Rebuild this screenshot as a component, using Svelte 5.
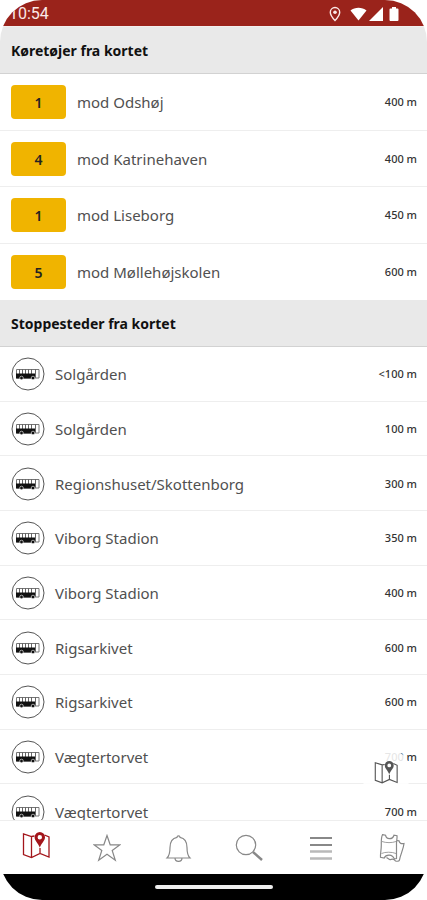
<script>
  const vehicles = [
    { line: '1', to: 'mod Odshøj', distance: '400 m' },
    { line: '4', to: 'mod Katrinehaven', distance: '400 m' },
    { line: '1', to: 'mod Liseborg', distance: '450 m' },
    { line: '5', to: 'mod Møllehøjskolen', distance: '600 m' }
  ];
  const stops = [
    { name: 'Solgården', distance: '<100 m' },
    { name: 'Solgården', distance: '100 m' },
    { name: 'Regionshuset/Skottenborg', distance: '300 m' },
    { name: 'Viborg Stadion', distance: '350 m' },
    { name: 'Viborg Stadion', distance: '400 m' },
    { name: 'Rigsarkivet', distance: '600 m' },
    { name: 'Rigsarkivet', distance: '600 m' },
    { name: 'Vægtertorvet', distance: '700 m' },
    { name: 'Vægtertorvet', distance: '700 m' }
  ];
</script>

{#snippet mapIcon()}
  <svg class="map" viewBox="0 0 28 28" aria-hidden="true">
    <path d="M12.500 4L9.500 4.500L1.500 2V22.500L9.500 25.500L18 21.500L27 25V5L22.500 3M9.500 4.500V25.500M18 16V21.500" fill="none" stroke="currentColor" stroke-width="1.300" />
    <path fill="currentColor" fill-rule="evenodd" d="M17.800 0a5.200 5.200 0 0 0-5.200 5.200c0 3.700 3.500 5.500 5.200 10.300c1.700-4.800 5.200-6.600 5.200-10.300a5.200 5.200 0 0 0-5.200-5.200zm0 3a2.200 2.200 0 1 1 0 4.400a2.200 2.200 0 0 1 0-4.400z" />
  </svg>
{/snippet}

<div class="phone">
  <div class="status">
    <span>10:54</span>
    <div class="signals">
      <svg width="12" height="16" viewBox="0 0 12 16" aria-hidden="true">
        <path d="M6 1.500a4.700 4.700 0 0 0-4.700 4.700C1.300 9.500 6 14.500 6 14.500s4.700-5 4.700-8.300A4.700 4.700 0 0 0 6 1.500z" fill="none" stroke="#fbe9e7" stroke-width="1.400" />
        <circle cx="6" cy="6.200" r="1.800" fill="#fbe9e7" />
      </svg>
      <svg class="wifi" width="17" height="16" viewBox="0 0 17 16" aria-hidden="true">
        <path d="M0.500 4.500C5 0.700 12 0.700 16.500 4.500L8.500 14.500z" fill="#fff" />
      </svg>
      <svg width="14" height="16" viewBox="0 0 14 16" aria-hidden="true"><path d="M14 1V15H0z" fill="#fff" /></svg>
      <svg class="battery" width="10" height="16" viewBox="0 0 10 16" aria-hidden="true">
        <path d="M3 1h4v1.500h1.500a1 1 0 0 1 1 1v10.500a1 1 0 0 1-1 1h-7a1 1 0 0 1-1-1V3.500a1 1 0 0 1 1-1H3z" fill="#fff" />
      </svg>
    </div>
  </div>

  <main>
    <h2>Køretøjer fra kortet</h2>
    <ul class="vehicles">
      {#each vehicles as v}
        <li><span class="line">{v.line}</span><span class="name">{v.to}</span><span class="distance">{v.distance}</span></li>
      {/each}
    </ul>
    <h2>Stoppesteder fra kortet</h2>
    <ul class="stops">
      {#each stops as s}
        <li>
          <svg class="bus" viewBox="0 0 34 34" aria-hidden="true">
            <circle cx="17" cy="17" r="16" fill="#fff" stroke="#555" stroke-width="1" />
            <path d="M5.500 12.500H28V21H5.500z" fill="#fff" stroke="#777" stroke-width="1" />
            <path d="M8.500 12v5M11.500 12v5M14.500 12v5M17.500 12v5M20.500 12v5M24.500 12v9" stroke="#666" stroke-width="1" />
            <path d="M5 16.500H24V21.500H5z" fill="#111" />
            <circle cx="10.500" cy="21" r="1.800" fill="#111" stroke="#fff" stroke-width=".6" />
            <circle cx="22" cy="21" r="1.800" fill="#111" stroke="#fff" stroke-width=".6" />
          </svg>
          <span class="name">{s.name}</span><span class="distance">{s.distance}</span>
        </li>
      {/each}
    </ul>
    <button class="show-map" aria-label="Vis kort">{@render mapIcon()}</button>
  </main>

  <nav>
    <button class="active" aria-label="Kort">{@render mapIcon()}</button>
    <button aria-label="Favoritter">
      <svg viewBox="0 0 28 28" aria-hidden="true"><path d="M14 1.500L17.200 10.800H27L19.200 16.500L22.300 26.200L14 20.300L5.700 26.200L8.800 16.500L1 10.800H10.800z" /></svg>
    </button>
    <button aria-label="Beskeder">
      <svg viewBox="0 0 28 28" aria-hidden="true"><path d="M3 24C5.500 21.500 6 19.500 6 13.500C6 7.500 9 4 13 3.300C13 1.500 16 1.500 16 3.300C20 4 23 7.500 23 13.500C23 19.500 23.500 21.500 26 24zM11 24C11 28.500 18 28.500 18 24" /></svg>
    </button>
    <button aria-label="Søg">
      <svg viewBox="0 0 28 28" aria-hidden="true"><circle cx="11" cy="11" r="9.700" /><path d="M18 18L27 26" stroke-width="2.400" /></svg>
    </button>
    <button aria-label="Menu">
      <svg viewBox="0 0 28 28" aria-hidden="true"><path d="M4 4H26M4 11H26" stroke-width="1.800" /><path d="M4 17.500H26M4 24.500H26" stroke="#b9b9b9" stroke-width="2.600" /></svg>
    </button>
    <button aria-label="Billetter">
      <svg viewBox="0 0 28 28" aria-hidden="true">
        <path d="M5.500 .7L8.500 1.200C9.300 5.800 15.500 5.800 17 1.200L20 1.700C20.400 4.500 19.300 7 19.500 11V24.500L17.300 24.900C15.500 20 9 20 7.200 24L3.500 23.300C3.200 20 4.300 16 4.300 11C4.300 7 4 3.500 5.500 .7z" />
        <path d="M5 7.500C9 9 15 9 19 7.500M4.500 19.500C8 17.800 15 17.800 19 19.500" stroke-width=".8" />
        <path d="M20 6.500L22 6.800C22.500 9.500 24.500 10 27 9.500C26.500 15 23.500 20 22.500 26C22 27.500 20.500 27.500 18.500 27C16.500 23.500 14 26 12.500 25.500L9.500 23.500" />
      </svg>
    </button>
  </nav>
  <div class="gesture"><span></span></div>
</div>

<style>
  :global(body) { margin: 0; background: #fff; }
  .phone {
    display: flex;
    flex-direction: column;
    height: 100vh;
    overflow: hidden;
    border-radius: 42px;
    background: #fff;
    color: #505050;
    font-family: "Noto Sans", "Open Sans", sans-serif;
  }
  .status {
    display: flex;
    align-items: center;
    justify-content: space-between;
    flex: none;
    box-sizing: border-box;
    height: 26px;
    padding: 2px 28px 0 9px;
    background: #9a231b;
    color: #fbe9e7;
    font: 16px/24px Roboto, sans-serif;
  }
  .signals { display: flex; align-items: center; }
  .wifi { margin-left: 9px; margin-right: 2px; }
  .battery { margin-left: 6px; }
  main {
    position: relative;
    flex: 1 1 0;
    min-height: 0;
    overflow: hidden;
  }
  h2 {
    box-sizing: border-box;
    height: 47px;
    margin: 0;
    padding: 0 11px;
    border-bottom: 1px solid #d2d2d2;
    background: #e9e9e9;
    color: #111;
    font-size: 14px;
    font-weight: 700;
    line-height: 47px;
  }
  h2:first-child { border-top: 1px solid #f3eeee; height: 48px; }
  ul {
    display: grid;
    grid-auto-rows: 1fr;
    margin: 0;
    padding: 0;
    list-style: none;
  }
  .vehicles { min-height: 226px; }
  .stops { min-height: 492px; }
  li {
    display: flex;
    align-items: center;
    padding: 1px 10px 0 11px;
    border-bottom: 1px solid #eee;
  }
  .vehicles li:last-child { border-bottom-color: #fff; }
  .line {
    width: 55px;
    height: 34px;
    margin-right: 11px;
    border-radius: 4px;
    background: #f0b400;
    color: #222;
    font-size: 14px;
    font-weight: 600;
    line-height: 35px;
    text-align: center;
  }
  .bus { width: 34px; height: 34px; margin-right: 10px; }
  .name { flex: 1; font-size: 15px; line-height: 20px; }
  .distance { color: #333; font-size: 11px; font-weight: 500; line-height: 16px; }
  button {
    display: grid;
    place-items: center;
    padding: 0;
    border: 0;
    background: none;
    color: #888;
  }
  .show-map {
    position: absolute;
    right: 16px;
    bottom: 22px;
    width: 50px;
    height: 50px;
    border-radius: 50%;
    background: rgba(255, 255, 255, .88);
    color: #555;
  }
  .show-map svg { width: 24px; height: 24px; }
  nav {
    display: grid;
    grid-template-columns: repeat(6, 1fr);
    flex: none;
    height: 53px;
    border-top: 1px solid #eee;
  }
  nav svg {
    width: 28px;
    height: 28px;
    fill: none;
    stroke: currentColor;
    stroke-width: 1.200;
  }
  nav .map { stroke: none; }
  nav .active { padding-bottom: 4px; color: #a3151b; }
  .gesture {
    display: grid;
    place-items: center;
    flex: none;
    height: 26px;
    background: #000;
  }
  .gesture span { width: 118px; height: 4px; border-radius: 2px; background: #eee; }
</style>
